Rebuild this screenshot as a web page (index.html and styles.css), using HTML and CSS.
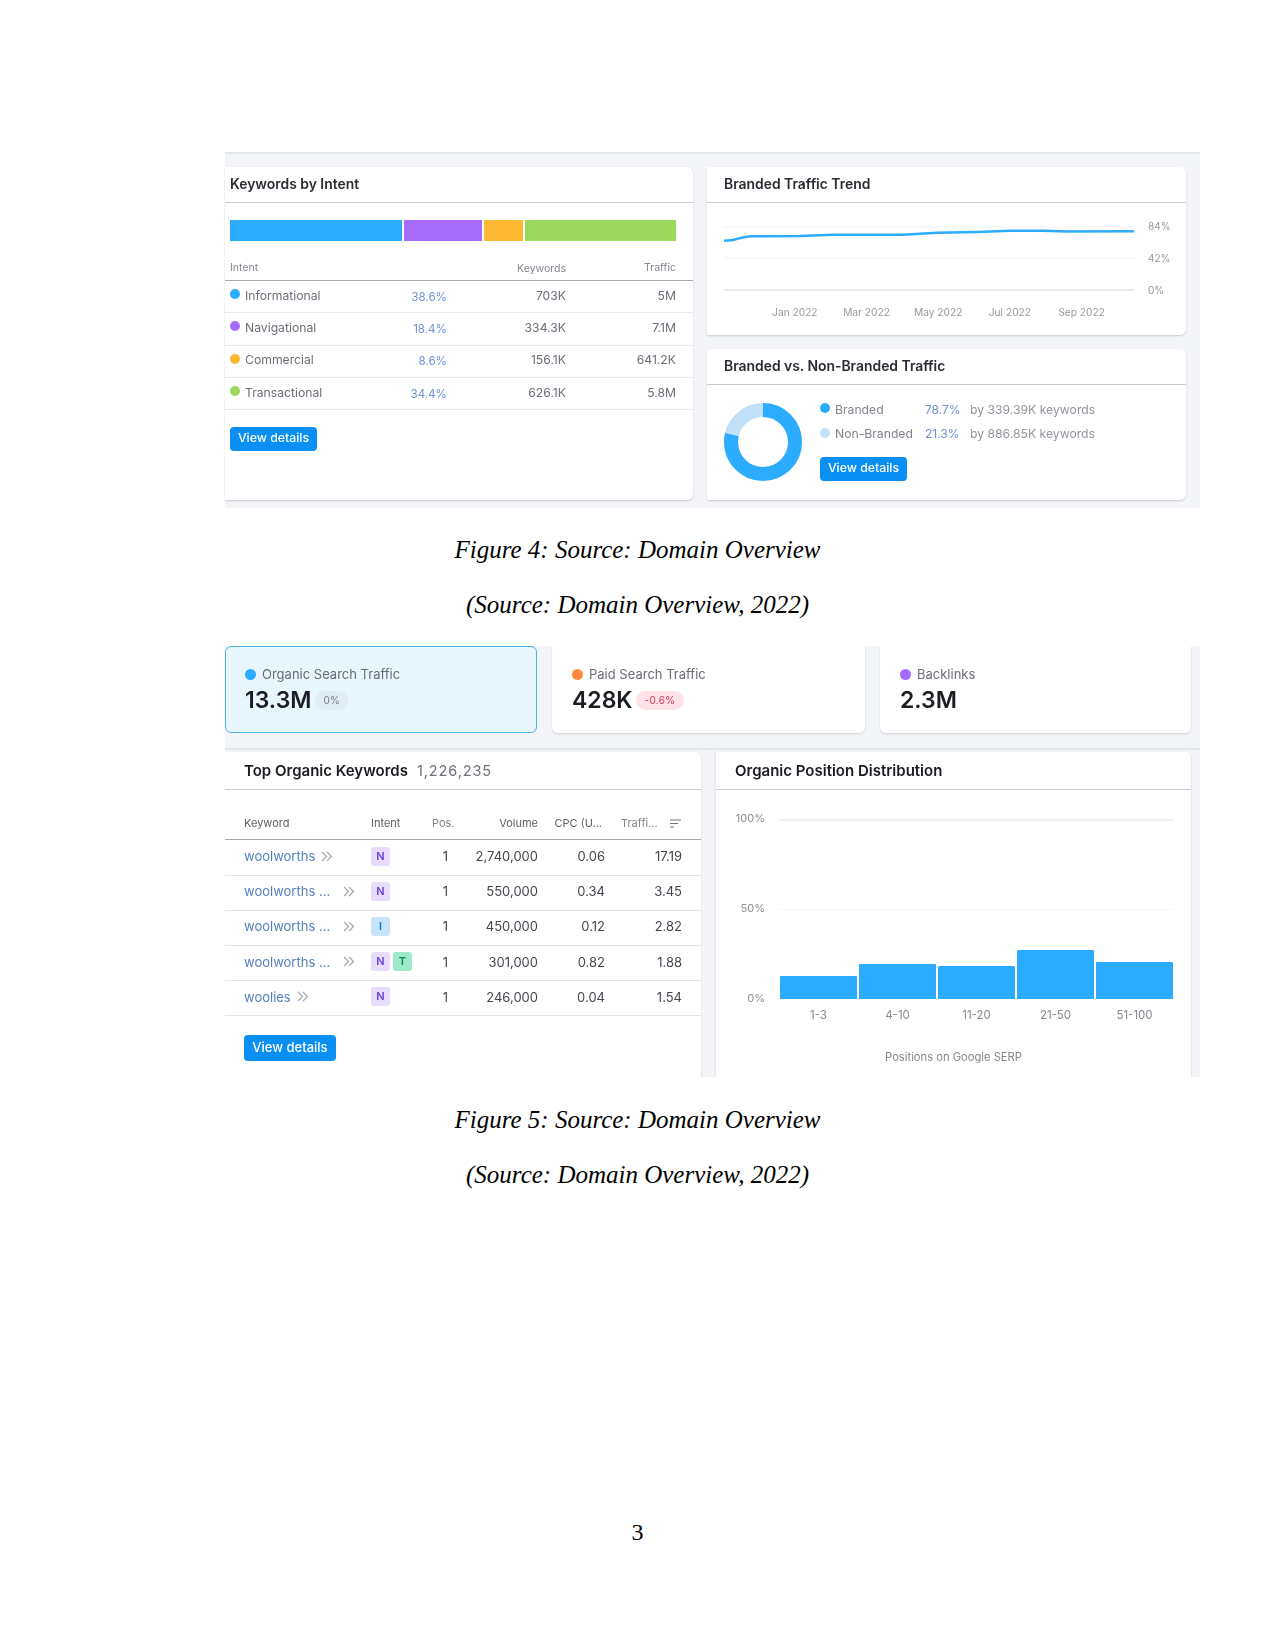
FILE: index.html
```html
<!DOCTYPE html>
<html lang="en">
<head>
    <meta charset="UTF-8">
    <title>Figure 4 and 5: Domain Overview</title>
    <link rel="stylesheet" href="styles.css">
</head>
<body>
    <div class="fig fig-a">
        <div class="card">
            <div class="card-head head-tight"><span class="title">Keywords by Intent</span></div>
            <div class="stack-bar">
                <i class="seg c-blue" style="width:172px"></i>
                <i class="seg c-purple" style="width:78px"></i>
                <i class="seg c-yellow" style="width:39px"></i>
                <i class="seg c-green" style="width:151px"></i>
            </div>
            <div class="intent-row intent-head">
                <span>Intent</span><span></span><span class="num shift">Keywords</span><span class="num">Traffic</span>
            </div>
            <div class="intent-row">
                <span class="lab"><i class="dot c-blue"></i>Informational</span><span class="num pct">38.6%</span><span class="num">703K</span><span class="num">5M</span>
            </div>
            <div class="intent-row">
                <span class="lab"><i class="dot c-purple"></i>Navigational</span><span class="num pct">18.4%</span><span class="num">334.3K</span><span class="num">7.1M</span>
            </div>
            <div class="intent-row">
                <span class="lab"><i class="dot c-yellow"></i>Commercial</span><span class="num pct">8.6%</span><span class="num">156.1K</span><span class="num">641.2K</span>
            </div>
            <div class="intent-row">
                <span class="lab"><i class="dot c-green"></i>Transactional</span><span class="num pct">34.4%</span><span class="num">626.1K</span><span class="num">5.8M</span>
            </div>
            <a class="btn btn-intent">View details</a>
        </div>

        <div class="right-col">
            <div class="card card-trend">
                <div class="card-head"><span class="title">Branded Traffic Trend</span></div>
                <div class="trend">
                    <svg class="trend-svg" width="410" height="72" viewBox="0 0 410 72">
                        <path d="M0 5H410M0 36H410" stroke="#f0f1f3" stroke-width="1" fill="none"/>
                        <path d="M0 68H410" stroke="#e9eaec" stroke-width="2" fill="none"/>
                        <path d="M0 18.7L9 18C15 16.6 21 14.6 28 14.3L76 14L109 12.7L179 12.7L213 10.7L253 10L286 8.7L319 8.7L343 9.5L410 9.3" stroke="#2bacfe" stroke-width="2.4" fill="none"/>
                    </svg>
                    <div class="trend-y"><span>84%</span><span>42%</span><span>0%</span></div>
                </div>
                <div class="trend-x"><span>Jan 2022</span><span>Mar 2022</span><span>May 2022</span><span>Jul 2022</span><span>Sep 2022</span></div>
            </div>
            <div class="card card-brand">
                <div class="card-head"><span class="title">Branded vs. Non-Branded Traffic</span></div>
                <div class="brand">
                    <svg class="donut" width="78" height="78" viewBox="0 0 78 78">
                        <circle cx="39" cy="39" r="32" fill="none" stroke="#c0e1f8" stroke-width="14"/>
                        <circle cx="39" cy="39" r="32" fill="none" stroke="#2bacfe" stroke-width="14" pathLength="100" stroke-dasharray="78.7 21.3" transform="rotate(-90 39 39)"/>
                    </svg>
                    <div class="brand-info">
                        <div class="brand-row"><span class="lab brand-lab"><i class="dot c-blue"></i>Branded</span><span class="pct brand-pct">78.7%</span><span class="brand-by">by 339.39K keywords</span></div>
                        <div class="brand-row"><span class="lab brand-lab"><i class="dot c-pale"></i>Non-Branded</span><span class="pct brand-pct">21.3%</span><span class="brand-by">by 886.85K keywords</span></div>
                        <a class="btn btn-brand">View details</a>
                    </div>
                </div>
            </div>
        </div>
    </div>

    <div class="caption">
        <p>Figure 4: Source: Domain Overview</p>
        <p>(Source: Domain Overview, 2022)</p>
    </div>

    <div class="fig fig-b">
        <div class="stats">
            <div class="stat stat-on">
                <div class="stat-lab"><i class="dot dot-lg c-blue"></i>Organic Search Traffic</div>
                <div class="stat-val">13.3M<span class="chip chip-grey">0%</span></div>
            </div>
            <div class="stat stat-mid">
                <div class="stat-lab"><i class="dot dot-lg c-orange"></i>Paid Search Traffic</div>
                <div class="stat-val">428K<span class="chip chip-red">-0.6%</span></div>
            </div>
            <div class="stat stat-end">
                <div class="stat-lab"><i class="dot dot-lg c-purple"></i>Backlinks</div>
                <div class="stat-val">2.3M</div>
            </div>
        </div>
        <div class="lower">
            <div class="card card-kw">
                <div class="card-head head-b"><span class="title">Top Organic Keywords</span><span class="count">1,226,235</span></div>
                <div class="kw-row kw-head">
                    <span>Keyword</span><span>Intent</span><span class="pos-head">Pos.</span><span class="num">Volume</span><span class="num nudge">CPC (U...</span>
                    <span class="traffic-head">Traffi...
                        <svg width="12" height="9" viewBox="0 0 12 9"><path d="M0 1H11M0 4.5H8M0 8H4" stroke="#70737c" stroke-width="1.2" fill="none"/></svg>
                    </span>
                </div>
                <div class="kw-row">
                    <span class="kw"><span class="kw-link">woolworths</span><svg class="chev" width="12" height="11" viewBox="0 0 12 11"><path d="M1 1L5.5 5.5L1 10M6 1L10.5 5.5L6 10" stroke="#a3a6ae" stroke-width="1.2" fill="none"/></svg></span>
                    <span class="tags"><b class="tag t-n">N</b></span><span class="num">1</span><span class="num">2,740,000</span><span class="num">0.06</span><span class="num">17.19</span>
                </div>
                <div class="kw-row">
                    <span class="kw"><span class="kw-link">woolworths ...</span><svg class="chev chev-far" width="12" height="11" viewBox="0 0 12 11"><path d="M1 1L5.5 5.5L1 10M6 1L10.5 5.5L6 10" stroke="#a3a6ae" stroke-width="1.2" fill="none"/></svg></span>
                    <span class="tags"><b class="tag t-n">N</b></span><span class="num">1</span><span class="num">550,000</span><span class="num">0.34</span><span class="num">3.45</span>
                </div>
                <div class="kw-row">
                    <span class="kw"><span class="kw-link">woolworths ...</span><svg class="chev chev-far" width="12" height="11" viewBox="0 0 12 11"><path d="M1 1L5.5 5.5L1 10M6 1L10.5 5.5L6 10" stroke="#a3a6ae" stroke-width="1.2" fill="none"/></svg></span>
                    <span class="tags"><b class="tag t-i">I</b></span><span class="num">1</span><span class="num">450,000</span><span class="num">0.12</span><span class="num">2.82</span>
                </div>
                <div class="kw-row">
                    <span class="kw"><span class="kw-link">woolworths ...</span><svg class="chev chev-far" width="12" height="11" viewBox="0 0 12 11"><path d="M1 1L5.5 5.5L1 10M6 1L10.5 5.5L6 10" stroke="#a3a6ae" stroke-width="1.2" fill="none"/></svg></span>
                    <span class="tags"><b class="tag t-n">N</b><b class="tag t-t">T</b></span><span class="num">1</span><span class="num">301,000</span><span class="num">0.82</span><span class="num">1.88</span>
                </div>
                <div class="kw-row">
                    <span class="kw"><span class="kw-link">woolies</span><svg class="chev" width="12" height="11" viewBox="0 0 12 11"><path d="M1 1L5.5 5.5L1 10M6 1L10.5 5.5L6 10" stroke="#a3a6ae" stroke-width="1.2" fill="none"/></svg></span>
                    <span class="tags"><b class="tag t-n">N</b></span><span class="num">1</span><span class="num">246,000</span><span class="num">0.04</span><span class="num">1.54</span>
                </div>
                <a class="btn btn-kw">View details</a>
            </div>
            <div class="card card-dist">
                <div class="card-head head-b"><span class="title">Organic Position Distribution</span></div>
                <div class="dist">
                    <div class="dist-y"><span>100%</span><span>50%</span><span>0%</span></div>
                    <div class="dist-plot">
                        <i class="bar" style="height:23px"></i>
                        <i class="bar" style="height:35px"></i>
                        <i class="bar" style="height:33px"></i>
                        <i class="bar" style="height:49px"></i>
                        <i class="bar" style="height:37px"></i>
                    </div>
                </div>
                <div class="dist-x"><span>1-3</span><span>4-10</span><span>11-20</span><span>21-50</span><span>51-100</span></div>
                <div class="dist-cap">Positions on Google SERP</div>
            </div>
        </div>
    </div>

    <div class="caption">
        <p>Figure 5: Source: Domain Overview</p>
        <p>(Source: Domain Overview, 2022)</p>
    </div>

    <div class="page-no">3</div>
</body>
</html>
```

FILE: styles.css
```css
*{margin: 0;padding: 0;box-sizing: border-box;}
body{
    background: #fff;
    padding-top: 152px;
    font-family: "Inter", "Liberation Sans", sans-serif;
    color: #6c6e79;
}
i{display: block;}

.c-blue{background: #2bacfe;}
.c-purple{background: #a76bfb;}
.c-yellow{background: #fdb733;}
.c-green{background: #9dd85e;}
.c-pale{background: #c4e2f8;}
.c-orange{background: #ff8a3d;}

/* figure shell */
.fig{
    width: 975px;
    margin-left: 225px;
    background: #f4f5f8;
    filter: blur(0.4px);
}
.fig-a{
    height: 356px;
    border-top: 2px solid #e6e7ea;
    padding-top: 13px;
    display: flex;
    gap: 14px;
}
.fig-b{
    height: 431px;
    margin-top: -1px;
    margin-bottom: 1px;
    overflow: hidden;
}

.card{
    background: #fff;
    border-radius: 0 6px 6px 0;
    box-shadow: 0 1px 2px rgba(40,50,70,.22);
}
.fig-a > .card{width: 468px;height: 333px;}
.right-col{width: 479px;display: flex;flex-direction: column;gap: 14px;}
.card-head{
    height: 36px;
    border-bottom: 1px solid #c8cad1;
    padding: 0 0 2px 17px;
    display: flex;
    align-items: center;
    gap: 9px;
}
.head-tight{padding-left: 5px;}
.head-b{height: 38px;padding: 0 0 0 19px;}
.title{font-size: 13.9px;font-weight: 600;color: #2b2c33;}
.head-b .title{color: #1b1c22;font-size: 15px;}
.count{font-size: 14.5px;letter-spacing: .9px;color: #70727a;}

.btn{
    display: block;
    width: 87px;
    height: 24px;
    line-height: 21px;
    text-align: center;
    background: #0a90f5;
    border-radius: 4px;
    color: #fff;
    font-size: 12.3px;
    font-weight: 500;
}

/* keywords by intent */
.stack-bar{display: flex;gap: 2px;margin: 17px 0 0 5px;height: 21px;}
.seg{height: 21px;}
.intent-row{
    display: grid;
    grid-template-columns: 130px 86px 120px 110px;
    align-items: center;
    height: 32.3px;
    padding-left: 5px;
    padding-bottom: 3px;
    border-bottom: 1px solid #e9eaed;
    font-size: 12.2px;
}
.intent-head{
    height: 40px;
    padding-top: 13px;
    padding-bottom: 0;
    border-bottom: 1px solid #a9abb2;
    font-size: 10.5px;
    color: #85878f;
}
.shift{position: relative;top: 1px;}
.num{text-align: right;}
.pct{color: #6e90d2;font-size: 11.6px;}
.intent-row .pct{margin-right: -1px;padding-top: 3px;}
.lab{display: flex;align-items: center;}
.dot{width: 10px;height: 10px;border-radius: 50%;margin-right: 5px;position: relative;top: -1px;}
.btn-intent{margin: 17px 0 0 5px;}

/* trend card */
.card-trend{height: 168px;}
.trend{display: flex;padding: 19px 0 0 17px;}
.trend-svg{display: block;}
.trend-y{
    height: 72px;
    margin: -2px 0 0 14px;
    display: flex;
    flex-direction: column;
    gap: 19px;
    font-size: 10px;
    line-height: 13px;
    color: #97999f;
}
.trend-x{
    display: flex;
    padding: 12px 0 0 52px;
    font-size: 10.2px;
    color: #97999f;
}
.trend-x span{width: 71.7px;text-align: center;white-space: nowrap;}

/* branded vs non branded */
.card-brand{height: 151px;}
.brand{display: flex;padding: 18px 0 0 17px;gap: 18px;}
.donut{display: block;flex: none;}
.brand-info{margin-top: -6px;}
.brand-row{
    display: flex;
    height: 24.5px;
    align-items: center;
    font-size: 12.2px;
}
.brand-lab{width: 105px;color: #83858d;}
.brand-pct{width: 45px;font-size: 12px;}
.brand-by{color: #92949c;}
.btn-brand{margin-top: 11px;}

/* captions */
.caption{
    padding: 15px 0;
    text-align: center;
    font-family: "Liberation Serif", serif;
    font-style: italic;
    font-size: 25px;
    line-height: 54.7px;
    color: #000;
}

/* stat tiles */
.stats{display: flex;gap: 15px;height: 104px;padding-right: 9px;border-bottom: 2px solid #e5e6e9;}
.stat{
    width: 312px;
    height: 87px;
    background: #fff;
    border-radius: 0 0 6px 6px;
    box-shadow: 0 1px 2px rgba(40,50,70,.18);
    padding: 20px 0 0 20px;
}
.stat-mid{width: 313px;}
.stat-end{width: 311px;}
.stat-on{background: #e8f6fe;border: 1px solid #4db2e6;border-radius: 6px;padding: 19px 0 0 19px;box-shadow: none;}
.stat-lab{display: flex;align-items: center;font-size: 13px;color: #6a6c74;line-height: 16px;}
.dot-lg{width: 11px;height: 11px;top: 0;margin-right: 6px;}
.stat-val{display: flex;align-items: center;font-size: 23px;font-weight: 600;color: #1c1d22;line-height: 30px;margin-top: 3px;}
.chip{
    margin-left: 4px;
    padding: 0 8px;
    height: 19px;
    line-height: 19px;
    border-radius: 10px;
    font-size: 10px;
    font-weight: 400;
    letter-spacing: .3px;
}
.chip-grey{background: #e1edf4;color: #7b7d85;}
.chip-red{background: #fde2e7;color: #d92f53;padding: 0 9px;margin-left: 3px;}

.lower{display: flex;gap: 15px;padding-top: 2px;}
.card-kw{width: 476px;height: 340px;}
.card-dist{width: 475px;height: 340px;}

/* keyword table */
.kw-row{
    display: grid;
    grid-template-columns: 127px 55px 22px 90px 67px 77px;
    align-items: center;
    height: 35.2px;
    padding-left: 19px;
    padding-bottom: 3px;
    border-bottom: 1px solid #e4e5e8;
    font-size: 13px;
    color: #44464e;
}
.kw-head{
    height: 50px;
    padding-top: 17px;
    padding-bottom: 0;
    border-bottom: 1px solid #a4a6ad;
    font-size: 11px;
    color: #5f6169;
}
.pos-head{margin-left: 6px;white-space: nowrap;color: #83858d;}
.nudge{margin-right: 3px;white-space: nowrap;}
.traffic-head{margin-left: 16px;display: flex;align-items: center;gap: 12px;white-space: nowrap;color: #83858d;}
.kw{display: flex;align-items: center;}
.kw-link{color: #5580bb;}
.chev{margin-left: 6px;flex: none;}
.chev-far{margin-left: 13px;}
.tags{display: flex;gap: 3px;}
.tag{
    width: 19px;
    height: 19px;
    border-radius: 3px;
    text-align: center;
    line-height: 19px;
    font-size: 11px;
    font-weight: 600;
}
.t-n{background: #e7dcfb;color: #6b42d6;}
.t-i{background: #c6e4fa;color: #0a79d6;}
.t-t{background: #9ee9c8;color: #0b8a5b;}
.btn-kw{width: 92px;height: 26px;line-height: 24px;margin: 19px 0 0 19px;font-size: 13px;}

/* distribution */
.dist{display: flex;padding: 29px 0 0 19px;}
.dist-y{
    width: 30px;
    height: 192px;
    margin-top: -7px;
    display: flex;
    flex-direction: column;
    justify-content: space-between;
    text-align: right;
    font-size: 11px;
    line-height: 12px;
    color: #8c8e95;
}
.dist-plot{
    width: 393px;
    height: 180px;
    margin-left: 15px;
    display: flex;
    align-items: flex-end;
    gap: 2px;
    background:
        linear-gradient(#eeeff1, #eeeff1) 0 0 / 100% 2px no-repeat,
        linear-gradient(#f3f4f5, #f3f4f5) 0 90px / 100% 1px no-repeat;
}
.bar{width: 77px;background: #2bacfe;border-radius: 1px 1px 0 0;}
.dist-x{
    display: flex;
    margin: 4px 0 0 63px;
    font-size: 11.5px;
    color: #85878e;
}
.dist-x span{width: 79px;text-align: center;}
.dist-cap{margin-top: 28px;text-align: center;font-size: 11.2px;color: #85878e;}

.page-no{
    margin-top: 299px;
    text-align: center;
    font-family: "Liberation Serif", serif;
    font-size: 24px;
    line-height: 30px;
    color: #000;
}
```
